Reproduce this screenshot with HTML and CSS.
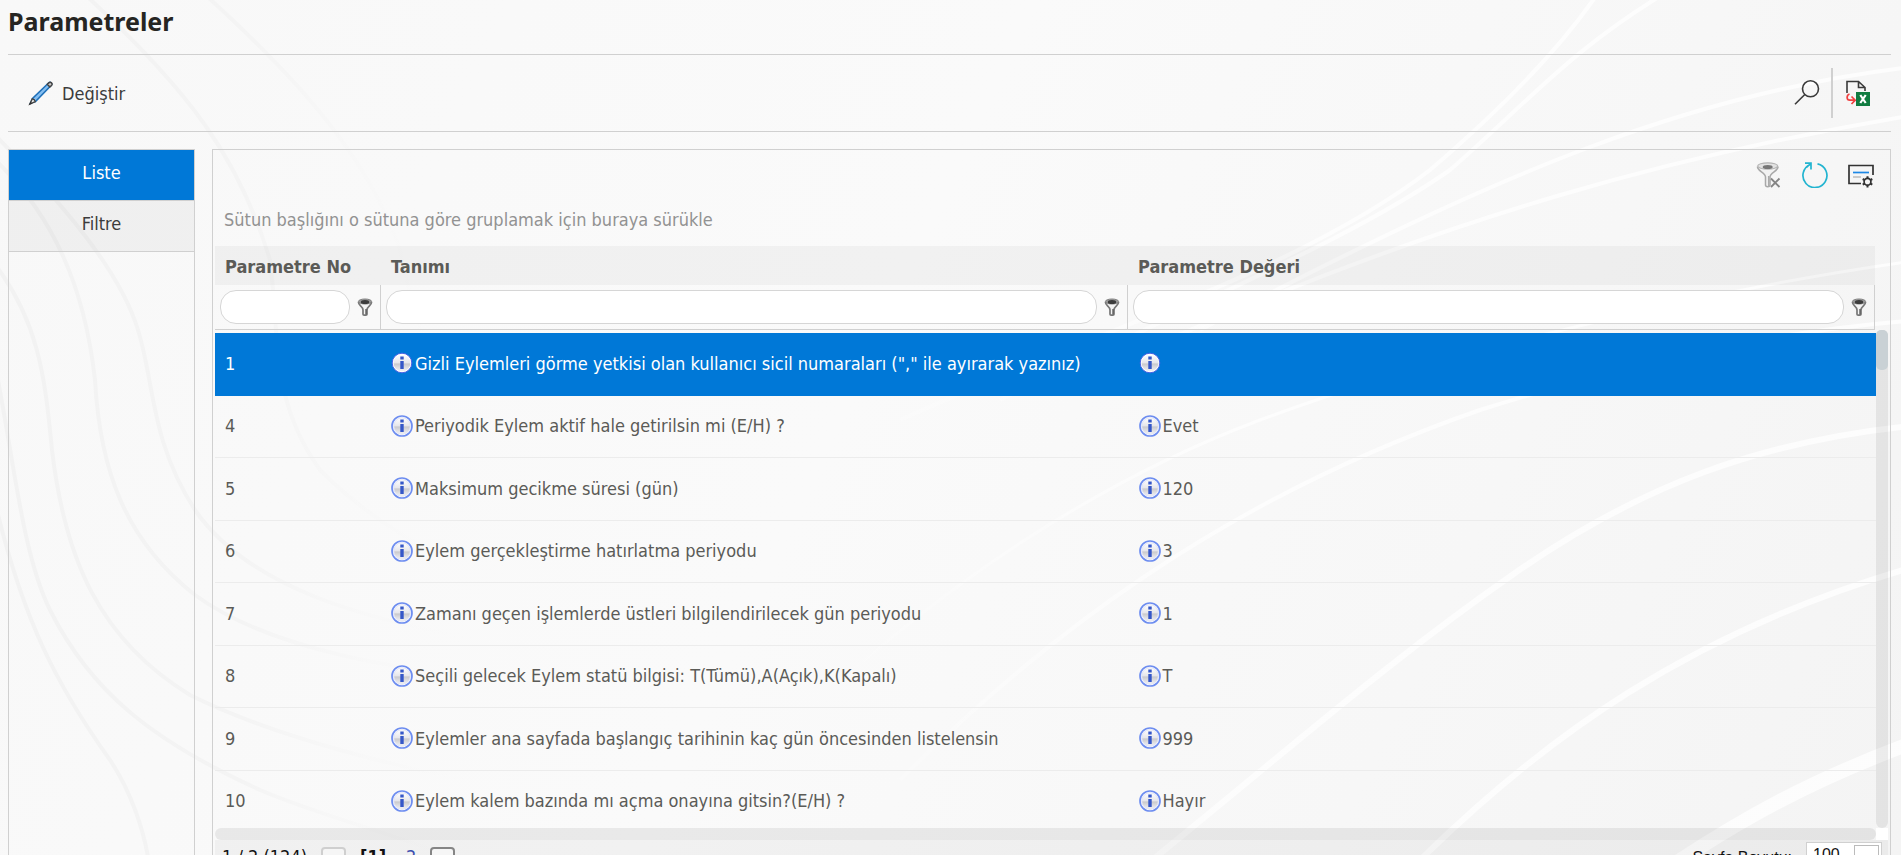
FILE: index.html
```html
<!DOCTYPE html>
<html lang="tr">
<head>
<meta charset="utf-8">
<title>Parametreler</title>
<link rel="stylesheet" href="styles.css">
</head>
<body>
<svg class="defs" width="0" height="0" aria-hidden="true">
  <defs>
    <linearGradient id="glass" x1="0" y1="0" x2="0" y2="1">
      <stop offset="0" stop-color="#ffffff"/><stop offset="0.5" stop-color="#e6e6ea"/><stop offset="0.55" stop-color="#c9c9cd"/><stop offset="1" stop-color="#f4f4f6"/>
    </linearGradient>
    <linearGradient id="fade-left" gradientUnits="userSpaceOnUse" x1="0" y1="0" x2="600" y2="0">
      <stop offset="0" stop-color="#f2f2f2"/><stop offset="0.4" stop-color="#f4f4f4"/><stop offset="0.8" stop-color="#f9f9f9" stop-opacity="0"/>
    </linearGradient>
    <linearGradient id="fade-right" gradientUnits="userSpaceOnUse" x1="800" y1="0" x2="1901" y2="0">
      <stop offset="0" stop-color="#fff" stop-opacity="0"/><stop offset="0.4" stop-color="#fff" stop-opacity="0.7"/><stop offset="1" stop-color="#fff" stop-opacity="0.8"/>
    </linearGradient>
  </defs>
  <symbol id="info" viewBox="0 0 22 22">
    <circle cx="11" cy="11" r="10" fill="#fff" stroke="#6d8df0" stroke-width="1.7"/>
    <circle cx="11" cy="11" r="8.3" fill="url(#glass)" stroke="#dfe3f6" stroke-width="1"/>
    <path d="M9.3 4.5h3.4v3H9.3zM9.3 9h3.4v8H9.3z" fill="#3557c8"/>
  </symbol>
  <symbol id="info-sel" viewBox="0 0 22 22">
    <circle cx="11" cy="11" r="9.8" fill="#fff" stroke="#4a63e4" stroke-width="1"/>
    <circle cx="11" cy="11" r="8.5" fill="url(#glass)"/>
    <path d="M9.3 4.5h3.4v3H9.3zM9.3 9h3.4v8H9.3z" fill="#3557c8"/>
  </symbol>
  <symbol id="funnel" viewBox="0 0 16 18">
    <path d="M1.500 4C1 7.500 6 8 6 12v4.300c0 1.200 4 1.200 4 0V12c0-4 5-4.500 4.500-8" fill="#f4f4f4" stroke="#777" stroke-width="1.700"/>
    <ellipse cx="8" cy="3.500" rx="6.600" ry="2.500" fill="#999" stroke="#808080"/>
    <ellipse cx="8" cy="4" rx="4.200" ry="2" fill="#3c3c3c"/>
    <path d="M9 11v5.500" stroke="#555" stroke-width="1.300"/>
  </symbol>
</svg>

<svg class="waves" viewBox="0 0 1901 855" preserveAspectRatio="none" aria-hidden="true">
  <g fill="none" stroke="url(#fade-left)" stroke-width="4">
    <path d="M-10 130C60 200 120 270 138 330C155 385 150 440 195 510C250 590 370 620 480 640"/>
    <path d="M-10 155C55 215 85 290 95 380C100 470 125 540 195 595C270 650 400 670 500 680"/>
    <path d="M-10 258C40 320 45 380 52 450C65 560 100 640 190 695C270 735 400 770 520 790"/>
    <path d="M-10 340C12 440 20 550 50 610C90 690 150 740 260 790C330 820 420 840 480 870"/>
    <path d="M-10 480C20 620 60 690 110 760C130 790 145 830 150 870"/>
    <path d="M80 -10C190 90 240 160 270 260C280 340 270 400 320 470C400 550 500 590 620 610"/>
    <path d="M200 -10C300 80 370 160 400 250C420 340 440 430 560 520"/>
  </g>
  <g fill="none" stroke="url(#fade-right)" stroke-width="6">
    <path d="M1140 870C1300 740 1390 660 1515 573S1760 440 1920 425"/>
    <path d="M1410 870C1540 740 1690 630 1920 565"/>
    <path d="M1665 870C1740 820 1810 780 1920 740" stroke-width="14"/>
    <path d="M820 700C950 580 1100 480 1260 420C1420 360 1700 290 1920 260" stroke-width="3"/>
    <path d="M900 780C1040 640 1220 500 1480 410C1640 360 1780 330 1920 320" stroke-width="4"/>
    <path d="M900 420C1100 330 1300 270 1430 170C1500 110 1560 50 1600 -10" stroke-width="4"/>
    <path d="M1000 400C1200 300 1350 240 1450 170C1530 100 1570 50 1670 -10" stroke-width="4"/>
    <path d="M1200 330C1500 170 1700 90 1920 66" stroke-width="4"/>
    <path d="M1100 370C1450 210 1700 150 1920 114" stroke-width="4"/>
  </g>
</svg>

<div class="page">
  <h1 class="title">Parametreler</h1>

  <header class="toolbar">
    <button class="tool tool-edit" type="button">
      <svg width="26" height="26" viewBox="0 0 26 26" aria-hidden="true">
        <path d="M2.500 23L4.500 18.500L20.800 2.800C22.300 1.300 24.800 3.800 23.300 5.300L7.500 21.500Z" fill="#83bdf0" stroke="#1d6fb8" stroke-width="1.500"/>
        <path d="M19.300 4.300l1.800-1.700c1.600-1.300 4 1.100 2.600 2.600l-1.800 1.800z" fill="#c9c9c9" stroke="#444" stroke-width="1.500"/>
        <path d="M4.300 18.700L1.800 24.200L7.300 21.700C7 20.200 5.800 19 4.300 18.700z" fill="#eee" stroke="#444" stroke-width="1.400"/>
        <path d="M1.200 24.800l1.200-3 1.900 1.900z" fill="#333"/>
      </svg>
      <span>Değiştir</span>
    </button>
    <div class="toolbar-end">
      <button class="tool tool-search" type="button" aria-label="Ara">
        <svg width="26" height="26" viewBox="0 0 26 26" fill="none" stroke="#3a3a3a" stroke-width="1.600"><circle cx="16.500" cy="8.800" r="8"/><path d="M10.800 14.500L1 24.300"/></svg>
      </button>
      <button class="tool tool-excel" type="button" aria-label="Excel">
        <svg width="26" height="26" viewBox="0 0 26 26" fill="none">
          <path d="M2 13V1.500h11.500l6.500 6v3.500M13.500 1.500V7.500H20" stroke="#3a3a3a" stroke-width="1.600"/>
          <path d="M4.500 14C1.500 15 1 20 5 20.200h5M6.500 16.500l3.700 3.700L6.500 24" stroke="#f04040" stroke-width="1.700"/>
          <path d="M11 12h14v14H11z" fill="#107c41"/>
          <path d="M15.300 15l5.400 8M20.700 15l-5.400 8" stroke="#fff" stroke-width="2.200"/>
        </svg>
      </button>
    </div>
  </header>

  <div class="content">
    <nav class="tabs">
      <button class="tab tab-active" type="button">Liste</button>
      <button class="tab" type="button">Filtre</button>
    </nav>

    <main class="grid">
      <div class="grid-tools">
        <button class="tool" type="button" aria-label="Filtreyi temizle">
          <svg width="26" height="26" viewBox="0 0 26 26" fill="none">
            <path d="M1.500 4.500C1 9 9.500 10.500 9.500 15v8c0 2 4.500 2.500 4.500 0v-8c0-4.500 8.500-6 8-10.500" fill="#f2f2f2" stroke="#a8a8a8" stroke-width="1.500"/>
            <ellipse cx="11.700" cy="4" rx="10" ry="3.200" fill="#e2e2e2" stroke="#b4b4b4" stroke-width="1.200"/>
            <ellipse cx="11.700" cy="5" rx="5" ry="2" fill="#777"/>
            <path d="M12.700 14v10" stroke="#aaa" stroke-width="1.500"/>
            <path d="M15 16.500l8.500 8.500M23.500 16.500L15 25" stroke="#858585" stroke-width="1.800"/>
          </svg>
        </button>
        <button class="tool" type="button" aria-label="Yenile">
          <svg width="26" height="26" viewBox="0 0 26 26" fill="none" stroke="#22b4d0" stroke-width="1.700"><path d="M15.500 1.800A12 12 0 1 1 8.200 2.500M3 1.200h6v6.300M9 1.200L4.500 5.500"/></svg>
        </button>
        <button class="tool" type="button" aria-label="Ayarlar">
          <svg width="26" height="26" viewBox="0 0 26 26" fill="none">
            <path d="M13 21.500H1V3.500h24v9.500" stroke="#333" stroke-width="1.700"/>
            <path d="M5 10.500h16" stroke="#1e88e5" stroke-width="1.700"/><path d="M5 15h8" stroke="#bbb" stroke-width="1.500"/>
            <circle cx="19.500" cy="19.800" r="3.400" stroke="#333" stroke-width="1.700"/>
            <path d="M19.500 14.200v2.400M19.500 23v2.500M14.700 17l2 1.100M22.300 21.500l2 1.100M14.700 22.600l2-1.100M22.300 18.100l2-1.100" stroke="#333" stroke-width="2"/>
          </svg>
        </button>
      </div>
      <p class="group-hint">Sütun başlığını o sütuna göre gruplamak için buraya sürükle</p>

      <table class="table head">
        <colgroup><col class="col-no"><col><col></colgroup>
        <thead>
          <tr><th scope="col">Parametre No</th><th scope="col">Tanımı</th><th scope="col">Parametre Değeri</th></tr>
          <tr class="filters">
            <td><div class="filter"><input type="text" aria-label="Parametre No filtresi"><button type="button" aria-label="Filtre koşulu"><svg width="16" height="18"><use href="#funnel"/></svg></button></div></td>
            <td><div class="filter"><input type="text" aria-label="Tanımı filtresi"><button type="button" aria-label="Filtre koşulu"><svg width="16" height="18"><use href="#funnel"/></svg></button></div></td>
            <td><div class="filter"><input type="text" aria-label="Parametre Değeri filtresi"><button type="button" aria-label="Filtre koşulu"><svg width="16" height="18"><use href="#funnel"/></svg></button></div></td>
          </tr>
        </thead>
      </table>

      <div class="body">
        <div class="rows">
          <table class="table">
            <colgroup><col class="col-no"><col><col></colgroup>
            <tbody>
              <tr class="selected"><td>1</td><td><span class="cell"><svg><use href="#info-sel"/></svg>Gizli Eylemleri görme yetkisi olan kullanıcı sicil numaraları ("," ile ayırarak yazınız)</span></td><td><span class="cell"><svg><use href="#info-sel"/></svg></span></td></tr>
              <tr><td>4</td><td><span class="cell"><svg><use href="#info"/></svg>Periyodik Eylem aktif hale getirilsin mi (E/H) ?</span></td><td><span class="cell"><svg><use href="#info"/></svg>Evet</span></td></tr>
              <tr><td>5</td><td><span class="cell"><svg><use href="#info"/></svg>Maksimum gecikme süresi (gün)</span></td><td><span class="cell"><svg><use href="#info"/></svg>120</span></td></tr>
              <tr><td>6</td><td><span class="cell"><svg><use href="#info"/></svg>Eylem gerçekleştirme hatırlatma periyodu</span></td><td><span class="cell"><svg><use href="#info"/></svg>3</span></td></tr>
              <tr><td>7</td><td><span class="cell"><svg><use href="#info"/></svg>Zamanı geçen işlemlerde üstleri bilgilendirilecek gün periyodu</span></td><td><span class="cell"><svg><use href="#info"/></svg>1</span></td></tr>
              <tr><td>8</td><td><span class="cell"><svg><use href="#info"/></svg>Seçili gelecek Eylem statü bilgisi: T(Tümü),A(Açık),K(Kapalı)</span></td><td><span class="cell"><svg><use href="#info"/></svg>T</span></td></tr>
              <tr><td>9</td><td><span class="cell"><svg><use href="#info"/></svg>Eylemler ana sayfada başlangıç tarihinin kaç gün öncesinden listelensin</span></td><td><span class="cell"><svg><use href="#info"/></svg>999</span></td></tr>
              <tr><td>10</td><td><span class="cell"><svg><use href="#info"/></svg>Eylem kalem bazında mı açma onayına gitsin?(E/H) ?</span></td><td><span class="cell"><svg><use href="#info"/></svg>Hayır</span></td></tr>
            </tbody>
          </table>
        </div>
        <div class="scroll-y"><div class="thumb"></div></div>
        <div class="scroll-x"></div>
        <div class="corner"></div>
      </div>

      <footer class="pager">
        <div class="pages">
          <span class="summary">1 / 2 (124)</span>
          <button class="page-btn" type="button" aria-label="Önceki" disabled>‹</button>
          <b class="current">[1]</b>
          <a class="page-link" href="#">2</a>
          <button class="page-btn" type="button" aria-label="Sonraki">›</button>
        </div>
        <div class="page-size">
          <label for="size">Sayfa Boyutu:</label>
          <div class="combo"><input id="size" type="text" value="100"><button type="button" aria-label="Aç"></button></div>
        </div>
      </footer>
    </main>
  </div>
</div>
</body>
</html>
```

FILE: styles.css
```css
* { box-sizing: border-box; }

html { overflow: hidden; }

body {
  margin: 0;
  height: 100vh;
  overflow: hidden;
  position: relative;
  background: linear-gradient(115deg, #f8f8f8 0%, #fafafa 45%, #f7f7f7 75%, #f4f4f4 100%);
  color: #5b5b57;
  font-family: "DejaVu Sans Condensed", "Noto Sans", sans-serif;
  font-size: 18px;
}

button, input { font: inherit; color: inherit; }
button { border: 0; padding: 0; background: none; cursor: pointer; }

.defs { position: absolute; }
.waves { position: absolute; inset: 0; width: 100%; height: 100%; }

.page {
  position: relative;
  display: flex;
  flex-direction: column;
  height: 100%;
  overflow: hidden;
  padding: 0 10px 0 8px;
}

.title {
  margin: 0;
  padding: 5px 0 17px;
  font-size: 25px;
  line-height: 32px;
  color: #262522;
  font-family: "Noto Sans", sans-serif;
}

.toolbar {
  display: flex;
  flex: none;
  align-items: center;
  justify-content: space-between;
  height: 78px;
  padding: 0 20px;
  border-top: 1px solid #d0d0d0;
  border-bottom: 1px solid #d0d0d0;
}
.tool { display: flex; align-items: center; gap: 8px; color: #3c3c3c; }
.tool svg { display: block; }
.toolbar-end { display: flex; align-items: center; }
.tool-search { padding-right: 11px; }
.tool-excel { height: 50px; padding-left: 12px; border-left: 2px solid #d0d0d0; }

.content { display: flex; gap: 17px; flex: 1; padding-top: 17px; }

.tabs {
  flex: none;
  width: 187px;
  min-height: 720px;
  border: 1px solid #d0d0d0;
  border-bottom: 0;
}
.tab {
  display: block;
  width: 100%;
  height: 51px;
  padding-bottom: 6px;
  border-bottom: 1px solid #d0d0d0;
  background: rgba(0, 0, 0, 0.035);
  color: #3c3c3c;
}
.tab-active { background: #0078d7; color: #fff; }

.grid {
  flex: 1;
  min-width: 0;
  padding: 0 2px;
  border: 1px solid #d0d0d0;
  border-bottom: 0;
}
.grid-tools {
  display: flex;
  justify-content: flex-end;
  gap: 20px;
  padding: 12px 14px 12px 0;
}
.group-hint { margin: 0; padding: 8px 9px 14px; line-height: 24px; color: #929292; }

.table { width: 100%; border-collapse: separate; border-spacing: 0; table-layout: fixed; }
.col-no { width: 166px; }
.head { width: calc(100% - 13px); }
th {
  height: 39px;
  padding: 2px 10px 0;
  background: rgba(0, 0, 0, 0.035);
  text-align: left;
}
.filters td {
  height: 45px;
  padding: 0;
  border-right: 1px solid #d0d0d0;
  border-bottom: 1px solid #d0d0d0;
}
.filter { display: flex; align-items: center; gap: 7px; padding: 0 7px 0 5px; }
.filter input {
  flex: 1;
  min-width: 0;
  height: 34px;
  padding: 0 14px;
  border: 1px solid #d6d6d6;
  border-radius: 16px;
  background: #fff;
}
.filter svg { display: block; }

.body {
  display: grid;
  grid-template-columns: minmax(0, 1fr) 12px;
  grid-template-rows: 498px 12px;
}
.rows { overflow: hidden; padding-top: 3px; }
.rows td { height: 62px; padding: 0 10px 2px; border-bottom: 1px solid #ececec; }
.rows tr:nth-child(odd) td { height: 63px; }
.rows .selected td { background: #0078d7; border-color: #0078d7; color: #fff; }
.cell { display: flex; align-items: center; gap: 2px; white-space: nowrap; }
.cell svg { width: 22px; height: 22px; flex: none; }

.scroll-y, .scroll-x { background: rgba(0, 0, 0, 0.065); border-radius: 6px; }
.thumb { height: 40px; border-radius: 5px; background: #c9d1d5; }
.corner { background: #fff; }

.pager {
  display: flex;
  align-items: flex-start;
  justify-content: space-between;
  padding: 2px 6px 4px 7px;
  background: rgba(0, 0, 0, 0.035);
  color: #111;
}
.pages, .page-size { display: flex; align-items: flex-start; }
.pages { padding-top: 5px; gap: 14px; line-height: 20px; }
.page-btn {
  width: 25px;
  height: 24px;
  border: 2px solid #858585;
  border-radius: 4px;
  background: #f6f6f6;
  line-height: 14px;
}
.page-btn:disabled { border-color: #cfcfcf; color: #b5b5b5; }
.page-link { padding-left: 6px; color: #3d4fae; text-decoration: none; }
.page-size {
  gap: 14px;
  font-family: "Liberation Sans", Arial, sans-serif;
  font-size: 16px;
  line-height: 20px;
}
.page-size label { padding-top: 6px; }
.combo {
  display: flex;
  width: 76px;
  height: 30px;
  padding: 2px;
  border: 1px solid #d0d0d0;
  background: #fff;
}
.combo input { flex: 1; min-width: 0; height: 20px; border: 0; padding: 0 4px; background: none; }
.combo button { width: 25px; border: 1px solid #bbb; }
```
